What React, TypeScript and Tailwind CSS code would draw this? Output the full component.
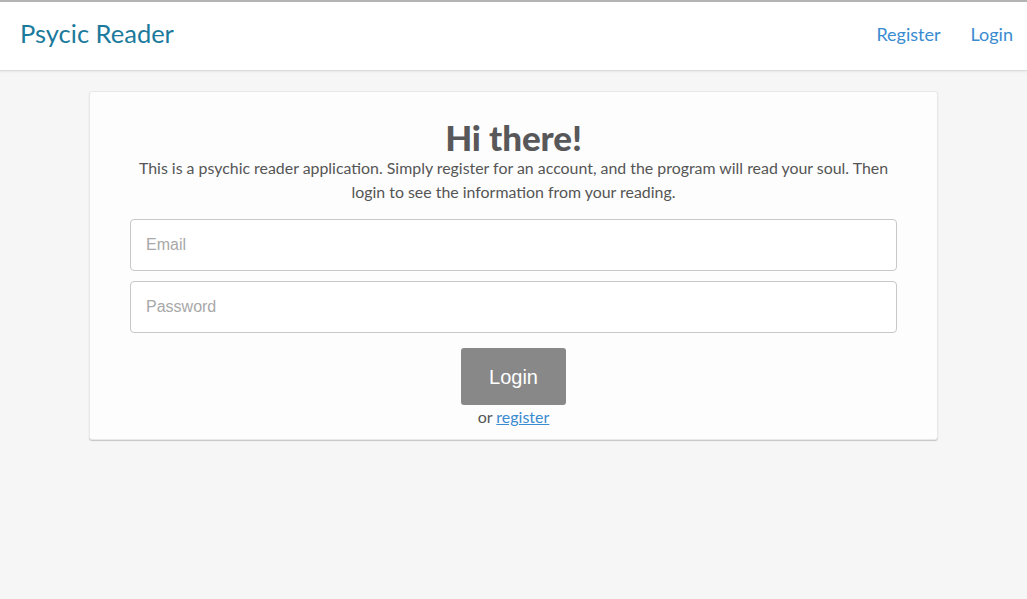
export default function App() {
  return (
    <div className="min-h-[599px] bg-[#f6f6f6] font-['Lato',sans-serif]">
      {/* Navbar */}
      <nav className="h-[71px] bg-white border-t-2 border-t-[#b4b4b4] border-b border-b-[#dcdcdc] shadow-[0_1px_2px_rgba(0,0,0,0.06)] flex items-center justify-between pl-5 pr-[14px]">
        <a className="text-[25.5px] text-[#1b7a9c] leading-none pb-[4px]">Psycic Reader</a>
        <div className="flex items-center gap-[30px] text-[18px] text-[#3a8bd0] pb-[4px]">
          <a>Register</a>
          <a>Login</a>
        </div>
      </nav>

      {/* Card */}
      <div className="mt-5 w-[849px] ml-[89px] bg-[#fdfdfd] border border-[#e8e8e8] rounded-[3px] shadow-[0_1px_1px_rgba(0,0,0,0.2)] px-10 pt-[27px] pb-[12px] flex flex-col items-center">
        <h1 className="text-[35px] font-black text-[#58585a] leading-[36px] tracking-[-0.1px]">Hi there!</h1>
        <p className="mt-[1px] text-[15.9px] text-[#555] leading-[24px] text-center w-[760px]">
          This is a psychic reader application. Simply register for an account, and the program will read your soul. Then login to see the information from your reading.
        </p>
        <input
          type="email"
          placeholder="Email"
          className="mt-[15px] w-full h-[52px] rounded-[4px] border border-[#c8c8c8] bg-white px-[15px] text-[16px] font-['Liberation_Sans',sans-serif] placeholder:text-[#a8a8a8] outline-none"
        />
        <input
          type="password"
          placeholder="Password"
          className="mt-[10px] w-full h-[52px] rounded-[4px] border border-[#c8c8c8] bg-white px-[15px] text-[16px] font-['Liberation_Sans',sans-serif] placeholder:text-[#a8a8a8] outline-none"
        />
        <button className="mt-[15px] w-[105px] h-[57px] rounded-[3px] bg-[#888888] text-white text-[20px] font-['Liberation_Sans',sans-serif]">
          Login
        </button>
        <p className="mt-[2px] text-[16px] text-[#555] leading-[20px]">
          or <a className="text-[#3a8bd0] underline">register</a>
        </p>
      </div>
    </div>
  );
}
